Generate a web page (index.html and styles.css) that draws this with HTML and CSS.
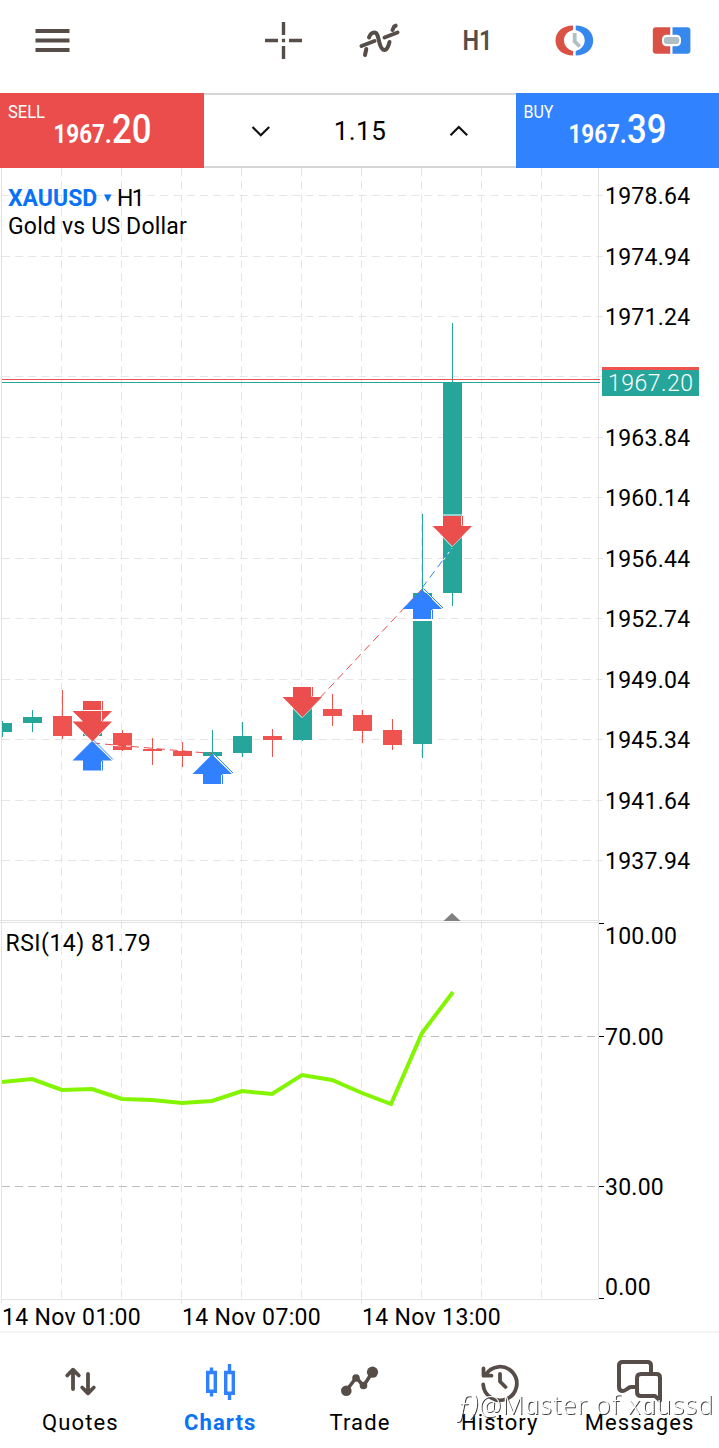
FILE: index.html
```html
<!DOCTYPE html>
<html lang="en">
<head>
  <meta charset="UTF-8" />
  <meta name="viewport" content="width=device-width, initial-scale=1.0" />
  <title>XAUUSD H1</title>
  <link rel="stylesheet" href="styles.css">
</head>
<body>
  <div class="app">
    <header class="toolbar">
      <svg class="menu-icon" width="105" height="93" viewBox="0 0 105 93">
        <path d="M35.5 31h34M35.5 40.5h34M35.5 50h34" stroke="#564d49" stroke-width="3.8" />
      </svg>
      <div class="tools">
        <svg width="97" height="93" viewBox="234 0 97 93" fill="none" stroke="#564d49" stroke-width="3.4">
          <path d="M283.5 22v13M283.5 46v13M265 40.5h13M289 40.5h13M281.9 40.5h3.2" />
        </svg>
        <svg width="97" height="93" viewBox="331 0 97 93" fill="none" stroke="#564d49" stroke-width="4" stroke-linecap="round">
          <path d="M365 55l1.3-6M369 37.5c1.5-4 3.5-5 5.3-5 3 0 3.7 4 4.7 8.5s2.500 9 5.500 9c2.500 0 4-4 5-8M392.500 30l1.700-3.500 1.500-.8" />
          <path d="M361.500 46l13-5M384.500 37.500l13-5" />
        </svg>
        <svg width="97" height="93" viewBox="428 0 97 93">
          <text class="tool-label" x="462.500" y="50" textLength="30" lengthAdjust="spacingAndGlyphs">H1</text>
        </svg>
        <svg width="97" height="93" viewBox="525 0 97 93">
          <path d="M573 25.500c-10.500 0-17.500 6.500-17.500 15s7 15 17.500 15v-4.600c-5.500-1.400-9-5.400-9-10.400s3.500-9 9-10.400z" fill="#da5245" />
          <path d="M575.700 25.500c10.500 0 17.500 6.500 17.500 15s-7 15-17.500 15v-4.600c5.500-1.400 9-5.400 9-10.400s-3.500-9-9-10.400z" fill="#3788ee" />
          <path d="M574.700 33v8.500l5 5" fill="none" stroke="#b0bec5" stroke-width="3.800" />
        </svg>
        <svg width="97" height="93" viewBox="622 0 97 93">
          <path d="M656 27.200h14.200v26.500H656a3.200 3.200 0 0 1-3.200-3.200V30.400a3.200 3.200 0 0 1 3.200-3.200z" fill="#da5245" />
          <path d="M672.500 27.200h14.700a3.200 3.200 0 0 1 3.200 3.200v20.100a3.200 3.200 0 0 1-3.200 3.200h-14.700z" fill="#3788ee" />
          <rect x="662" y="34.700" width="19" height="11.500" rx="4.500" fill="#fff" />
          <rect x="663.800" y="37" width="15.500" height="7" rx="3" fill="#b0bec5" />
        </svg>
      </div>
    </header>

    <section class="trade-panel">
      <svg class="sell" width="204" height="75" viewBox="0 93 204 75">
        <text class="side" x="8" y="118" textLength="37" lengthAdjust="spacingAndGlyphs">SELL</text>
        <text class="price" x="53.500" y="143" textLength="58" lengthAdjust="spacingAndGlyphs">1967.</text>
        <text class="pips" x="112" y="143" textLength="39.500" lengthAdjust="spacingAndGlyphs">20</text>
      </svg>
      <div class="volume">
        <svg width="20" height="12" viewBox="0 0 20 12"><path d="M1.500 2l8.300 8.300L18.200 2" /></svg>
        <span>1.15</span>
        <svg width="20" height="12" viewBox="0 0 20 12"><path d="M1.500 10.300L9.800 2l8.400 8.300" /></svg>
      </div>
      <svg class="buy" width="203" height="75" viewBox="516 93 203 75">
        <text class="side" x="523.500" y="118" textLength="30" lengthAdjust="spacingAndGlyphs">BUY</text>
        <text class="price" x="568.500" y="143" textLength="58" lengthAdjust="spacingAndGlyphs">1967.</text>
        <text class="pips" x="627" y="143" textLength="39.500" lengthAdjust="spacingAndGlyphs">39</text>
      </svg>
    </section>

    <main class="chart">
      <svg width="719" height="1163" viewBox="0 168 719 1163">
        <defs>
          <g id="up">
            <path d="M0 0l20 19.500H10V29.500H-9V19.500H-19.500z" fill="#3080ff" />
            <path d="M1.500 0l19 19M9.500 20.500v9" stroke="#fff" fill="none" />
            <path d="M1.500 -1l19.500 19.500M10.500 20v9.500" stroke="#3080ff" fill="none" />
          </g>
          <g id="down">
            <path d="M-9.500-1h20M-19.500 10.500L0 30.500l20-20" stroke="#fff" fill="none" />
            <path d="M-9 0H10V10H20L.500 30-19.500 10H-9z" fill="#ea4e4d" />
            <path d="M9.500 0v9.500" stroke="#fff" />
            <path d="M10.500 0v9.500" stroke="#ea4e4d" />
          </g>
        </defs>

        <!-- grid -->
        <g class="grid">
          <path d="M61.500 168V1299M121.500 168V1299M181.500 168V1299M241.500 168V1299M301.500 168V1299M361.500 168V1299M421.500 168V1299M481.500 168V1299M541.500 168V1299" />
          <path d="M2 195.500H603M2 256.500H603M2 316.500H603M2 376.500H603M2 437.500H603M2 497.500H603M2 558.500H603M2 618.500H603M2 679.500H603M2 739.500H603M2 800.500H603M2 860.500H603" />
        </g>
        <path class="frame" d="M1.500 168V1303M598.500 168V1299M0 920.500H600M0 922.500H600M1 1299.500H599M181.500 1299V1304M361.500 1299V1304" />
        <path class="level" d="M2 1036.500H599M2 1186.500H599" />
        <path d="M599 923.500h5M599 1036.500h5M599 1186.500h5M599 1298.500h5" stroke="#000" />

        <!-- candles -->
        <g class="bull">
          <path d="M2.500 721V737M32.500 710V732M212.500 730V756M242.500 722V757M302.500 706V741M422.500 514V758M452.500 323V606" />
          <path d="M2 723h10v9H2zM23 717h19v6H23zM83 733h19v3H83zM203 752h19v4H203zM233 736h19v17H233zM293 706h19v34H293zM413 593h19v151H413zM443 382h19v211H443z" />
        </g>
        <g class="bear">
          <path d="M62.500 690V739M122.500 730V751M152.500 738V765M182.500 742V767M272.500 729V757M332.500 694V726M362.500 710V743M392.500 719V750" />
          <path d="M53 716h19v20H53zM113 733h19v17H113zM143 749h19v2H143zM173 751h19v5H173zM263 736h19v4H263zM323 709h19v7H323zM353 715h19v16H353zM383 730h19v15H383z" />
        </g>

        <path d="M2 379.500H600" stroke="#ef5350" />
        <path d="M2 382.500H600" stroke="#26a69a" />

        <!-- deals -->
        <g fill="none" stroke-dasharray="8 5">
          <path d="M113 745.500l25 1" stroke="#fff" />
          <path d="M92 743L212 753.500M302 717L422 589" stroke="#ea4e4d" />
          <path d="M422 588L452 548" stroke="#3080ff" />
          <path d="M443.500 560L452 548" stroke="#fff" stroke-dasharray="3 4" />
        </g>
        <use href="#down" x="92" y="701" />
        <use href="#down" x="92" y="711.500" />
        <use href="#down" x="302" y="687" />
        <use href="#down" x="452" y="516" />
        <use href="#up" x="92" y="741" />
        <use href="#up" x="212" y="754.500" />
        <path d="M413 620h19" stroke="#fff" stroke-width="2" />
        <use href="#up" x="422" y="589.500" />

        <path d="M452 913l8.500 8h-17z" fill="#808080" />
        <polyline class="rsi" points="2,1082 32,1079 62,1090 92,1089 122,1099 152,1100 182,1103 212,1101 242,1091 272,1094 302,1075 332,1080 362,1093 391,1104 422,1033 453,992" />

        <g class="label">
          <text x="605" y="204">1978.64</text>
          <text x="605" y="265">1974.94</text>
          <text x="605" y="325">1971.24</text>
          <text x="605" y="446">1963.84</text>
          <text x="605" y="506">1960.14</text>
          <text x="605" y="567">1956.44</text>
          <text x="605" y="627">1952.74</text>
          <text x="605" y="688">1949.04</text>
          <text x="605" y="748">1945.34</text>
          <text x="605" y="809">1941.64</text>
          <text x="605" y="869">1937.94</text>
          <text x="605" y="944">100.00</text>
          <text x="605" y="1045">70.00</text>
          <text x="605" y="1195">30.00</text>
          <text x="605" y="1295">0.00</text>
          <text x="2" y="1325" textLength="139">14 Nov 01:00</text>
          <text x="182" y="1325" textLength="139">14 Nov 07:00</text>
          <text x="362" y="1325" textLength="139">14 Nov 13:00</text>
          <text x="5.500" y="951" textLength="145.500">RSI(14) 81.79</text>
          <text class="symbol" x="8" y="206" textLength="89.500">XAUUSD</text>
          <text x="117" y="206" textLength="28">H1</text>
          <text x="8" y="234" textLength="179">Gold vs US Dollar</text>
        </g>
        <path d="M104 194.500h7.500l-3.750 7.500z" fill="#0a73f5" />

        <path d="M602 367h97v4h-97z" fill="#ef5350" />
        <path d="M602 370h97v26h-97z" fill="#26a69a" />
        <text class="bid" x="608" y="391" textLength="85">1967.20</text>
      </svg>
    </main>

    <nav class="tabs">
      <a class="tab">
        <svg width="48" height="44" viewBox="56 1360 48 44" fill="none" stroke="#564d49" stroke-width="3.800" stroke-linecap="round" stroke-linejoin="round">
          <path d="M73 1389V1370M67.200 1375.500l5.800-5.800 5.800 5.800M88 1374v19M82.200 1387.500l5.800 5.800 5.800-5.800" />
        </svg>
        <span>Quotes</span>
      </a>
      <a class="tab active">
        <svg width="48" height="44" viewBox="196 1360 48 44" fill="none" stroke="#3080ff" stroke-width="3.400">
          <path d="M207.700 1372.500h7.600v18.800h-7.600zM225.700 1372.500h7.600v20.800h-7.600zM211.500 1367.500v4M211.500 1392v4.500M229.500 1364v8M229.500 1394v6" />
        </svg>
        <span>Charts</span>
      </a>
      <a class="tab">
        <svg width="48" height="44" viewBox="336 1360 48 44" fill="#564d49">
          <path d="M347 1391l10.300-13.500 7.200 8.500 9-14" fill="none" stroke="#564d49" stroke-width="3.500" />
          <circle cx="347.300" cy="1390.800" r="5.300" /><circle cx="357" cy="1378" r="3.800" /><circle cx="364.500" cy="1385.500" r="3.800" /><circle cx="373.500" cy="1372.200" r="5.600" />
        </svg>
        <span>Trade</span>
      </a>
      <a class="tab">
        <svg width="48" height="44" viewBox="475.500 1360 48 44" fill="none" stroke="#564d49" stroke-width="3.800" stroke-linecap="round" stroke-linejoin="round">
          <path d="M486 1375a16.800 16.800 0 1 1-2.300 9.500M484 1368.500v7.200h8M500.500 1374v7.500l5.500 5.500" />
        </svg>
        <span>History</span>
      </a>
      <a class="tab">
        <svg width="48" height="44" viewBox="615 1360 48 44" fill="none" stroke="#564d49" stroke-width="4" stroke-linejoin="round">
          <path d="M636 1387h-5c-3 0-5 4-8 4-2.500 0-4-1.500-4-4v-21.500q0-3.500 3.500-3.500h25q3.500 0 3.500 3.500v7" />
          <path d="M641 1374h15.500q3.500 0 3.500 3.500v23l-5-4.500h-14q-4 0-4-4v-14q0-4 4-4z" />
        </svg>
        <span>Messages</span>
      </a>
      <svg class="watermark" width="264" height="36" viewBox="455 1388 264 36">
        <text class="mark" x="456" y="1415" textLength="22"><tspan>ƒ)</tspan></text>
        <text x="479" y="1414" textLength="234">@Mɑster of xɑussd</text>
      </svg>
    </nav>
  </div>
</body>
</html>
```

FILE: styles.css
```css
* {
  box-sizing: border-box;
}

html, body {
  margin: 0;
  padding: 0;
  background: #fff;
  color: #000;
  font-family: Roboto, sans-serif;
}

svg {
  display: block;
}

.app {
  display: flex;
  flex-direction: column;
  width: 719px;
  height: 1448px;
  overflow: hidden;
}

.toolbar {
  display: flex;
  justify-content: space-between;
  height: 93px;
}

.tools {
  display: flex;
}

.tool-label {
  font-size: 28px;
  font-weight: 600;
  fill: #564d49;
}

.trade-panel {
  display: grid;
  grid-template-columns: 204px 312px 203px;
  height: 75px;
}

.sell {
  background: #ea4d4c;
}

.buy {
  background: #3182ff;
}

.trade-panel text {
  fill: #fff;
}

.side {
  font-size: 19px;
}

.price {
  font-size: 25px;
  font-weight: 700;
}

.pips {
  font-size: 41px;
  font-weight: 500;
}

.volume {
  display: flex;
  align-items: center;
  justify-content: space-between;
  padding: 0 47px;
  border-top: 2px solid #d6d6d6;
  border-bottom: 2px solid #d6d6d6;
  font-size: 26px;
  letter-spacing: 0.5px;
}

.volume path {
  fill: none;
  stroke: #111;
  stroke-width: 2.2;
}

.chart {
  height: 1163px;
}

.grid {
  stroke: #e5e5e5;
  stroke-dasharray: 8 5.2;
}

.frame {
  stroke: #e3e3e3;
}

.level {
  stroke: #bdbdbd;
  stroke-dasharray: 8 5;
}

.bull {
  fill: #26a69a;
}

.bull path:first-child {
  stroke: #26a69a;
}

.bear {
  fill: #ef5350;
}

.bear path:first-child {
  stroke: #ef5350;
}

.rsi {
  fill: none;
  stroke: #84f500;
  stroke-width: 4;
}

.label {
  font-size: 23px;
  letter-spacing: 0.25px;
}

.symbol {
  font-weight: 700;
  fill: #0a73f5;
}

.bid {
  font-size: 23px;
  font-weight: 300;
  fill: #fff;
}

.tabs {
  position: relative;
  display: flex;
  height: 117px;
  padding: 27px 10px 0;
  border-top: 2px solid #f5f5f5;
}

.tab {
  display: flex;
  flex: 1;
  flex-direction: column;
  align-items: center;
  font-size: 22px;
  line-height: 26px;
  letter-spacing: 1.1px;
}

.tab span {
  margin-top: 6px;
  margin-left: 1px;
}

.active {
  color: #0a73f5;
  font-weight: 700;
}

.watermark {
  position: absolute;
  left: 455px;
  top: 55px;
  font-family: "Open Sans", sans-serif;
  font-size: 25px;
  font-weight: 300;
  fill: #fff;
  filter: drop-shadow(1px 1px 0.4px #444);
}

.mark {
  font-size: 27px;
  font-style: italic;
}
```
